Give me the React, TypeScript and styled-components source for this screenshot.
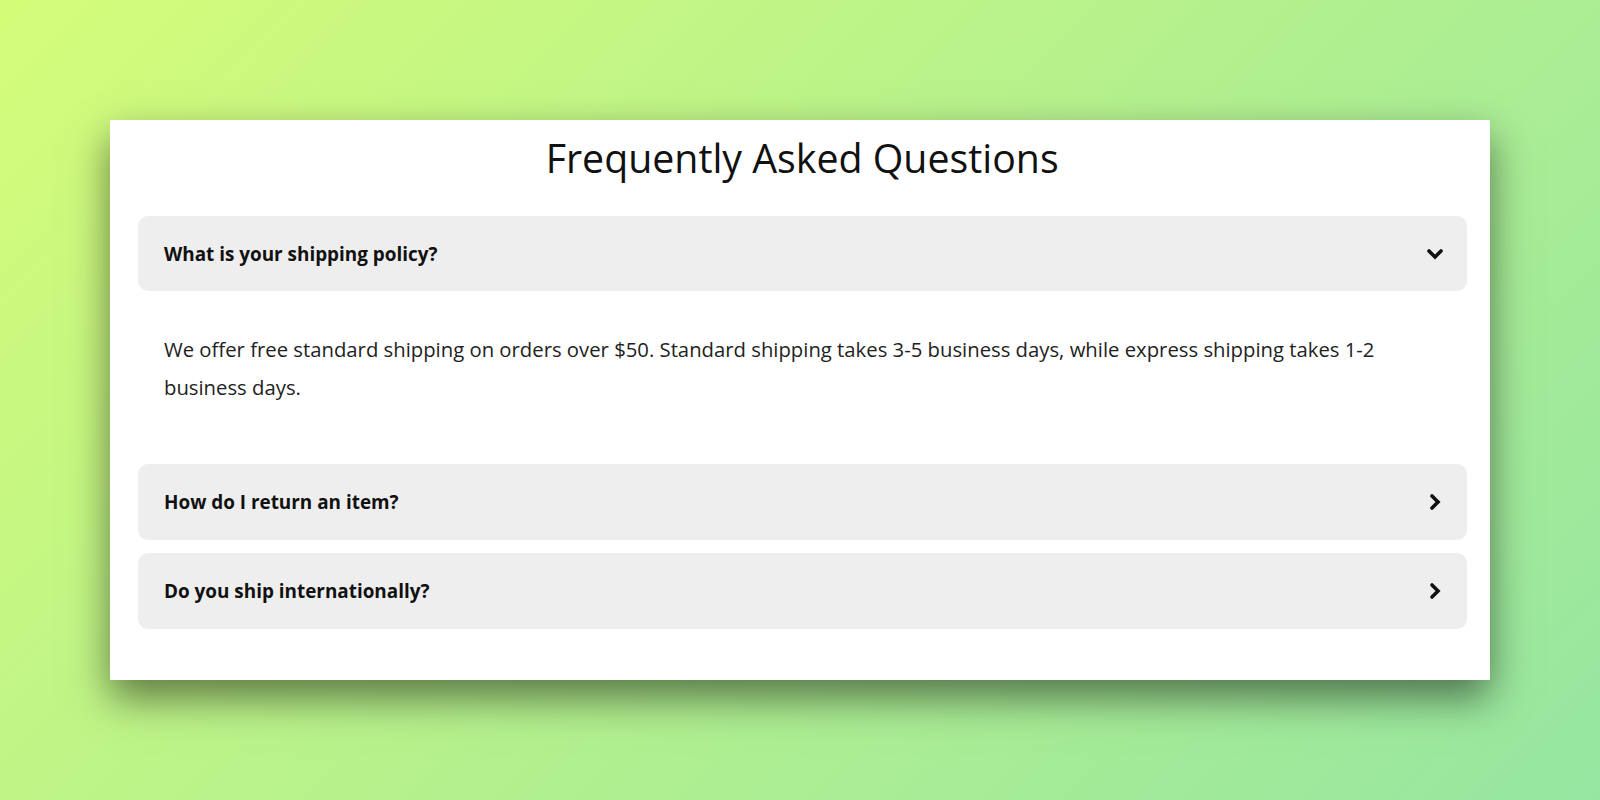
import React, { useState } from "react";
import styled, { createGlobalStyle } from "styled-components";

const GlobalStyle = createGlobalStyle`
  *, *::before, *::after { box-sizing: border-box; }
  html, body { margin: 0; padding: 0; }
  body {
    font-family: "Open Sans", "Liberation Sans", sans-serif;
    background: linear-gradient(135deg, #d4fc79 0%, #96e6a1 100%);
    min-height: 100vh;
  }
`;

const Page = styled.main`
  min-height: 100vh;
  display: flex;
  align-items: center;
  justify-content: center;
`;

const Card = styled.section`
  width: 1380px;
  background: #ffffff;
  padding: 15.3px 23.3px 51.7px 27.7px;
  box-shadow: 0 18px 38px rgba(0, 0, 0, 0.5);
`;

const Title = styled.h1`
  margin: 0 0 34.1px;
  font-size: 39.3px;
  line-height: 46.6px;
  font-weight: 400;
  color: #111111;
  text-align: center;
`;

const List = styled.div`
  display: flex;
  flex-direction: column;
  gap: 13.4px;
`;

const Item = styled.div``;

const Header = styled.button`
  width: 100%;
  height: 75.5px;
  display: flex;
  align-items: center;
  justify-content: space-between;
  padding: 0 23px 0 26.3px;
  border: none;
  border-radius: 10px;
  background: #eeeeee;
  cursor: pointer;
  font-family: inherit;
  text-align: left;
`;

const Question = styled.span`
  font-size: 18.9px;
  font-weight: 700;
  color: #111111;
`;

const Chevron = styled.svg<{ $open: boolean }>`
  width: 18px;
  height: 18px;
  flex: none;
  transform: rotate(${(p) => (p.$open ? "0deg" : "-90deg")});
`;

const Answer = styled.p`
  margin: 0;
  padding: 40px 26.3px 44.5px;
  font-size: 20.3px;
  line-height: 37.5px;
  color: #222222;
`;

const faqs = [
  {
    q: "What is your shipping policy?",
    a: "We offer free standard shipping on orders over $50. Standard shipping takes 3-5 business days, while express shipping takes 1-2 business days.",
  },
  {
    q: "How do I return an item?",
    a: "You can return any unused item within 30 days of delivery for a full refund.",
  },
  {
    q: "Do you ship internationally?",
    a: "Yes, we ship to most countries worldwide. Shipping costs and delivery times vary by destination.",
  },
];

export default function App() {
  const [open, setOpen] = useState<number | null>(0);
  return (
    <>
      <GlobalStyle />
      <Page>
        <Card>
          <Title>Frequently Asked Questions</Title>
          <List>
            {faqs.map((f, i) => (
              <Item key={f.q}>
                <Header type="button" onClick={() => setOpen(open === i ? null : i)}>
                  <Question>{f.q}</Question>
                  <Chevron $open={open === i} viewBox="0 0 18 18" fill="none" aria-hidden="true">
                    <polyline
                      points="3,6 9,12 15,6"
                      stroke="#111111"
                      strokeWidth={3.6}
                      strokeLinecap="round"
                      strokeLinejoin="miter"
                    />
                  </Chevron>
                </Header>
                {open === i && <Answer>{f.a}</Answer>}
              </Item>
            ))}
          </List>
        </Card>
      </Page>
    </>
  );
}
